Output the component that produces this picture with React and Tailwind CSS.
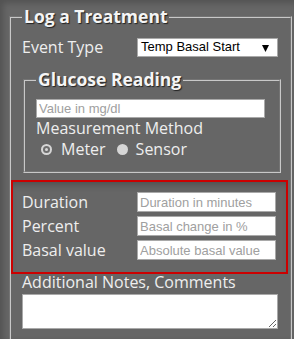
import { useState } from "react";

const label = "font-['Open_Sans',sans-serif] text-[16px] text-[#eeeeee]";
const field =
  "bg-white border border-[#a9a9a9] font-['Liberation_Sans',Arial,sans-serif] text-[13px] text-black px-[2px] outline-none placeholder:text-[#a0a0a0]";
const legend =
  "px-[2px] font-['Open_Sans',sans-serif] font-bold text-[17.5px] leading-[23px] text-[#f5f5f5] [text-shadow:1px_1px_1px_#222]";

export default function App() {
  const [method, setMethod] = useState("meter");

  return (
    <div className="w-[294px] h-[339px] overflow-hidden bg-[#666666] shadow-[inset_3px_3px_6px_rgba(0,0,0,0.2)] pt-[5px]">
      <fieldset className="ml-[9px] mr-[2px] border-2 border-[#c8c8c8] [border-style:groove] pl-[11px] pt-[8px] pb-[40px]">
        <legend className={legend}>Log a Treatment</legend>

        {/* event type */}
        <div className="flex items-center h-[22px]">
          <span className={label + " w-[115px] leading-[22px]"}>Event Type</span>
          <div className="relative w-[141px] h-[19px] bg-white border border-[#a9a9a9] flex items-center pl-[3px] font-['Liberation_Sans',Arial,sans-serif] text-[13px] text-black">
            Temp Basal Start
            <svg className="absolute right-[8px] top-[6px]" width="7" height="7" viewBox="0 0 7 7">
              <path d="M0 0H7L3.5 7Z" fill="#000" />
            </svg>
          </div>
        </div>

        {/* glucose */}
        <fieldset className="mt-[10px] ml-[1px] w-[258px] border-2 border-[#c8c8c8] [border-style:groove] pl-[11px] pt-[8px] pb-[11px]">
          <legend className={legend}>Glucose Reading</legend>
          <input className={field + " w-[229px] h-[19px] block"} placeholder="Value in mg/dl" />
          <div className={label + " leading-[21px]"}>Measurement Method</div>
          <div className={label + " leading-[21px] flex items-center"}>
            <span
              onClick={() => setMethod("meter")}
              className="ml-[5px] w-[11px] h-[11px] rounded-full bg-[#d6d6d6] flex items-center justify-center"
            >
              {method === "meter" && (
                <span className="w-[7px] h-[7px] rounded-full bg-[#6e6e6e] flex items-center justify-center">
                  <span className="w-[3px] h-[3px] rounded-full bg-[#d6d6d6]" />
                </span>
              )}
            </span>
            <span className="ml-[9px]">Meter</span>
            <span
              onClick={() => setMethod("sensor")}
              className="ml-[11px] w-[11px] h-[11px] rounded-full bg-[#d6d6d6] flex items-center justify-center"
            >
              {method === "sensor" && (
                <span className="w-[7px] h-[7px] rounded-full bg-[#6e6e6e] flex items-center justify-center">
                  <span className="w-[3px] h-[3px] rounded-full bg-[#d6d6d6]" />
                </span>
              )}
            </span>
            <span className="ml-[8px]">Sensor</span>
          </div>
        </fieldset>

        {/* temp basal */}
        <div className="mt-[7px] -ml-[11px] w-[277px] border-2 border-[#cc0000] shadow-[inset_0_6px_8px_-5px_rgba(0,0,0,0.3)] pl-[9px] pt-[10px] pb-[12px] flex flex-col gap-[4px]">
          <div className="flex items-center h-[20px]">
            <span className={label + " w-[115px] leading-[20px]"}>Duration</span>
            <input className={field + " w-[139px] h-[20px]"} placeholder="Duration in minutes" />
          </div>
          <div className="flex items-center h-[20px]">
            <span className={label + " w-[115px] leading-[20px]"}>Percent</span>
            <input className={field + " w-[139px] h-[20px]"} placeholder="Basal change in %" />
          </div>
          <div className="flex items-center h-[20px]">
            <span className={label + " w-[115px] leading-[20px]"}>Basal value</span>
            <input className={field + " w-[139px] h-[20px]"} placeholder="Absolute basal value" />
          </div>
        </div>

        <div className={label + " leading-[16px]"}>Additional Notes, Comments</div>
        <textarea className={field + " mt-[4px] block w-[256px] h-[35px]"} />
      </fieldset>
    </div>
  );
}
